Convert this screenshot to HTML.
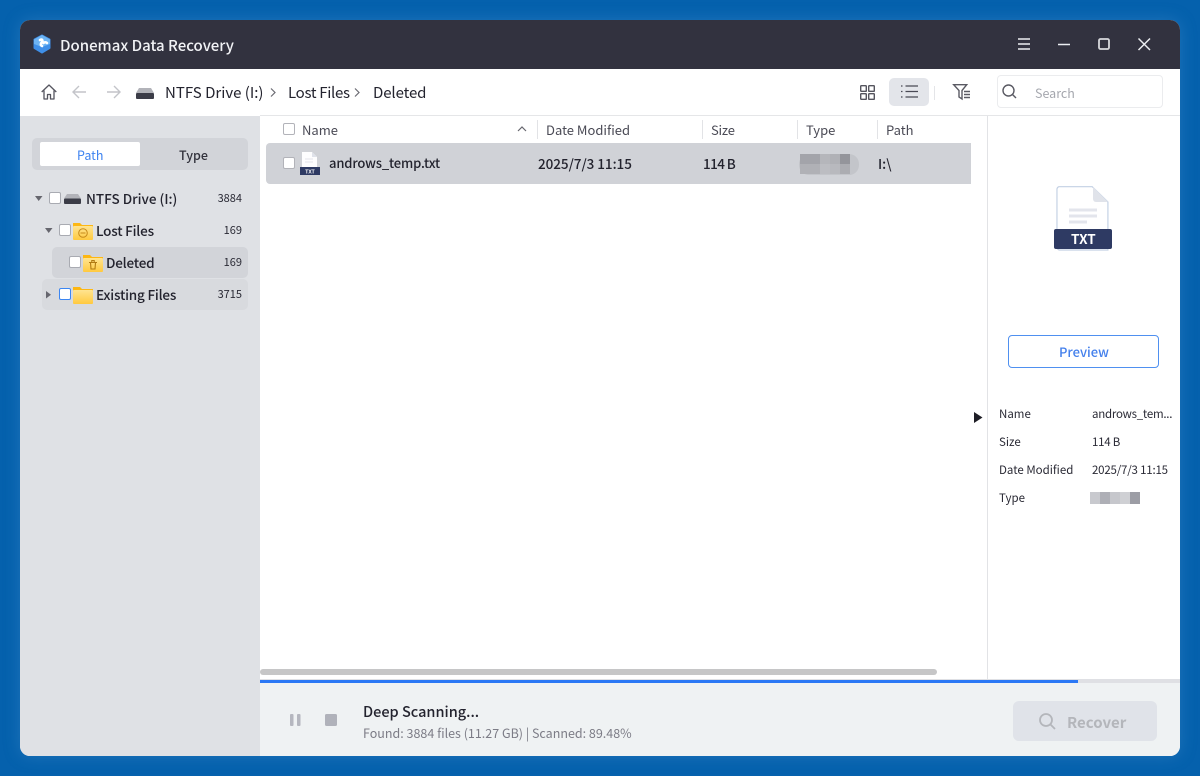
<!DOCTYPE html>
<html><head><meta charset="utf-8"><style>
*{box-sizing:border-box;margin:0;padding:0}
html,body{width:1200px;height:776px;overflow:hidden}
body{background:#0561ad;font-family:"Noto Sans CJK SC","Liberation Sans",sans-serif;color:#23232e;position:relative}
.a{position:absolute;white-space:nowrap;line-height:20px}
.cb{position:absolute;width:12px;height:12px;border:1px solid #a9abb2;border-radius:2px;background:#fff}
svg{position:absolute;overflow:visible}
.h{font-size:13px;color:#4a4a55;top:120px}
.sep{position:absolute;top:120px;width:1px;height:19px;background:#e2e3e6}
.t{font-size:13.5px;font-weight:500;color:#23232e;letter-spacing:-.2px}
.n{font-size:11px;color:#2a2a35}
.d{font-size:11.500px;color:#2a2a35}
.v{letter-spacing:-.25px}
.r{font-size:13.500px;font-weight:500;color:#23232e}
</style></head><body>
<div style="position:absolute;left:20px;top:20px;width:1160px;height:736px;border-radius:10px;background:#fff;box-shadow:0 0 16px rgba(70,145,205,.4)"></div>
<div style="position:absolute;left:20px;top:20px;width:1160px;height:49px;border-radius:10px 10px 0 0;background:#32323f"></div>
<svg style="left:32px;top:34px" width="20" height="20" viewBox="0 0 20 20"><path d="M10 1.500 17.500 5.500V14L10 18.500 2.500 14V5.500z" fill="#3f8fe8" stroke="#3f8fe8" stroke-width="2" stroke-linejoin="round"/><path d="M10 1 18 5.500v4.500l-8 3-8-3V5.500z" fill="#6db4f4"/><path d="M8 6c2-1 3 0 2 2-1 1-2 3 0 4M11.500 9c1-1 2.500-1 3.500 0" stroke="#fff" stroke-width="2.600" fill="none" stroke-linecap="round"/></svg>
<div class="a" style="left:60px;top:36px;font-size:15px;font-weight:500;color:#f2f3f6">Donemax Data Recovery</div>
<svg style="left:1018px;top:38px" width="13" height="13" fill="none" stroke="#eceef2" stroke-width="1.500"><path d="M0 1h12M0 6h12M0 11h12"/></svg>
<svg style="left:1058px;top:38px" width="13" height="13" fill="none" stroke="#eceef2" stroke-width="1.500"><path d="M0 6.500h12"/></svg>
<svg style="left:1098px;top:38px" width="13" height="13" fill="none" stroke="#d8d9dd" stroke-width="1.800"><rect x="1" y="1" width="10" height="10" rx="1.500"/></svg>
<svg style="left:1138px;top:38px" width="13" height="13" fill="none" stroke="#eceef2" stroke-width="1.500"><path d="M.5.500l11.500 11.500M12 .5.500 12"/></svg>

<svg style="left:41px;top:84px" width="16" height="16" fill="none" stroke="#55555f" stroke-width="1.300" stroke-linejoin="round"><path d="M.7 8 8 1l7.300 7M3 6.500V15h3.500v-4.500h3V15H13V6.500"/></svg>
<svg style="left:72px;top:85px" width="15" height="14" fill="none" stroke="#c3c4c9" stroke-width="1.400"><path d="M14 7H1M7 1 1 7l6 6"/></svg>
<svg style="left:106px;top:85px" width="15" height="14" fill="none" stroke="#c3c4c9" stroke-width="1.400"><path d="M1 7h13M8 1l6 6-6 6"/></svg>
<svg style="left:136px;top:88px" width="18" height="11"><path d="M3 0h12l3 5H0z" fill="#b2b3b9"/><rect y="5" width="18" height="6" rx="1" fill="#3b3c47"/></svg>
<div class="a" style="left:165px;top:83px;font-size:15px;color:#23232e">NTFS Drive (I:)</div>
<svg style="left:270px;top:88px" width="6" height="9" fill="none" stroke="#6a6a72" stroke-width="1.200"><path d="M1 .5 5 4.500 1 8.500"/></svg>
<div class="a" style="left:288px;top:83px;font-size:15px;letter-spacing:-.3px">Lost Files</div>
<svg style="left:354px;top:88px" width="6" height="9" fill="none" stroke="#6a6a72" stroke-width="1.200"><path d="M1 .5 5 4.500 1 8.500"/></svg>
<div class="a" style="left:373px;top:83px;font-size:15px;letter-spacing:-.1px">Deleted</div>

<svg style="left:860px;top:85px" width="15" height="15" fill="none" stroke="#55555e" stroke-width="1.400"><rect x=".7" y=".7" width="5.600" height="5.600" rx=".6"/><rect x="8.700" y=".7" width="5.600" height="5.600" rx=".6"/><rect x=".7" y="8.700" width="5.600" height="5.600" rx=".6"/><rect x="8.700" y="8.700" width="5.600" height="5.600" rx=".6"/></svg>
<div style="position:absolute;left:889px;top:78px;width:40px;height:28px;border-radius:5px;background:#e3e5ea"></div>
<svg style="left:901px;top:85px" width="17" height="13" fill="none" stroke="#4a4a55" stroke-width="1.300"><path d="M0 1h1.500M4.500 1H17M0 6.500h1.500M4.500 6.500H17M0 12h1.500M4.500 12H17"/></svg>
<div style="position:absolute;left:934px;top:86px;width:1px;height:14px;background:#e4e5e8"></div>
<svg style="left:953px;top:84px" width="18" height="16" fill="none" stroke="#5a5a63" stroke-width="1.400"><path d="M.7.700h13L9 6.500V15L6 13V6.500z"/><path d="M11 7.500h6M11 10.500h6M11 13.500h6"/></svg>
<div style="position:absolute;left:997px;top:75px;width:166px;height:33px;border:1px solid #ebecee;border-radius:4px"></div>
<svg style="left:1002px;top:84px" width="15" height="15" fill="none" stroke="#5a5a63" stroke-width="1.400"><circle cx="6.500" cy="6.500" r="5.500"/><path d="m10.500 10.500 3.500 3.500"/></svg>
<div class="a" style="left:1035px;top:83px;font-size:12.500px;color:#a5a7ae">Search</div>

<div style="position:absolute;left:20px;top:116px;width:240px;height:640px;background:#dfe1e5;border-radius:0 0 0 10px"></div>
<div style="position:absolute;left:32px;top:138px;width:216px;height:32px;border-radius:5px;background:#d2d4d9"></div>
<div style="position:absolute;left:40px;top:142px;width:100px;height:24px;border-radius:2px;background:#fff"></div>
<div class="a" style="left:77px;top:145px;font-size:12.500px;color:#3c82f0">Path</div>
<div class="a" style="left:179px;top:145px;font-size:12.500px;color:#33333d;font-weight:500">Type</div>

<div style="position:absolute;left:52px;top:247px;width:196px;height:31px;border-radius:5px;background:#d2d4d9"></div>
<div style="position:absolute;left:42px;top:279px;width:206px;height:31px;border-radius:5px;background:#d8dade"></div>
<svg style="left:35px;top:196px" width="8" height="5"><path d="M0 0h7.500L3.700 5z" fill="#66666e"/></svg>
<svg style="left:45px;top:228px" width="8" height="5"><path d="M0 0h7.500L3.700 5z" fill="#66666e"/></svg>
<svg style="left:46px;top:291px" width="5" height="8"><path d="M0 0v7.500L5 3.700z" fill="#66666e"/></svg>
<div class="cb" style="left:49px;top:192px"></div>
<div class="cb" style="left:59px;top:224px"></div>
<div class="cb" style="left:69px;top:256px"></div>
<div class="cb" style="left:59px;top:288px;border-color:#3c86f2"></div>
<svg style="left:64px;top:194px" width="17" height="10"><path d="M3 0h11l3 4.500H0z" fill="#b2b3b9"/><rect y="4.500" width="17" height="5.500" rx="1" fill="#3b3c47"/></svg>
<svg width="0" height="0"><defs><linearGradient id="f" x1="0" y1="0" x2="0" y2="1"><stop offset="0" stop-color="#ffe491"/><stop offset="1" stop-color="#ffc93f"/></linearGradient></defs></svg>
<svg style="left:73px;top:222px" width="20" height="18"><path d="M0 1h7l2 2h11v6H0z" fill="#fdb713"/><rect y="4" width="20" height="14" rx="1" fill="url(#f)"/><circle cx="10" cy="11" r="4.300" fill="none" stroke="#c78a1a" stroke-width="1"/><path d="M7.500 11h5" stroke="#c78a1a"/></svg>
<svg style="left:83px;top:254px" width="20" height="18"><path d="M0 1h7l2 2h11v6H0z" fill="#fdb713"/><rect y="4" width="20" height="14" rx="1" fill="url(#f)"/><path d="M6 8.500h8M7.500 8.500l.5 6.500h4l.5-6.500M8.800 8.500V6.500h2.400v2" fill="none" stroke="#b17a12" stroke-width="1.100"/></svg>
<svg style="left:73px;top:286px" width="20" height="18"><path d="M0 1h7l2 2h11v6H0z" fill="#fdb713"/><rect y="4" width="20" height="14" rx="1" fill="url(#f)"/></svg>
<div class="a t" style="left:86px;top:188px;letter-spacing:0">NTFS Drive (I:)</div>
<div class="a t" style="left:96px;top:220px">Lost Files</div>
<div class="a t" style="left:106px;top:252px">Deleted</div>
<div class="a t" style="left:96px;top:284px">Existing Files</div>
<div class="a n" style="right:958px;top:188px">3884</div>
<div class="a n" style="right:958px;top:220px">169</div>
<div class="a n" style="right:958px;top:252px">169</div>
<div class="a n" style="right:958px;top:284px">3715</div>

<div style="position:absolute;left:260px;top:115px;width:920px;height:1px;background:#e5e6e8"></div>
<div class="cb" style="left:283px;top:123px;border-color:#b2b3b9"></div>
<div class="a h" style="left:302px">Name</div>
<svg style="left:517px;top:126px" width="10" height="6" fill="none" stroke="#66666e" stroke-width="1.200"><path d="M1 5 5 1l4 4"/></svg>
<div class="sep" style="left:537px"></div><div class="a h" style="left:546px">Date Modified</div>
<div class="sep" style="left:702px"></div><div class="a h" style="left:711px;letter-spacing:-.2px">Size</div>
<div class="sep" style="left:797px"></div><div class="a h" style="left:806px">Type</div>
<div class="sep" style="left:877px"></div><div class="a h" style="left:886px">Path</div>

<div style="position:absolute;left:266px;top:143px;width:705px;height:41px;border-radius:4px 0 0 4px;background:#d0d2d7"></div>
<div class="cb" style="left:283px;top:157px;border-color:#b2b3b9"></div>
<svg style="left:300px;top:152px" width="20" height="23"><path d="M2 0h10l5 5v14H2z" fill="#fdfdfe"/><path d="M12 0v5h5z" fill="#dfe2ea"/><path d="M5 7h8M5 10h8" stroke="#e2e4ea"/><rect y="15" width="20" height="8" fill="#2e3a63"/><text x="10" y="21.500" text-anchor="middle" font-size="5" font-weight="700" fill="#fff" font-family="Liberation Sans">TXT</text></svg>
<div class="a r" style="left:329px;top:153px;font-size:13px;letter-spacing:-.15px">androws_temp.txt</div>
<div class="a r" style="left:538px;top:153px;letter-spacing:-.05px">2025/7/3 11:15</div>
<div class="a r" style="left:703px;top:153px;letter-spacing:-.6px">114 B</div>
<div style="position:absolute;left:799px;top:154px;width:60px;height:21px;border-radius:10px;background:#c3c5ca"></div>
<svg style="left:800px;top:154px" width="50" height="20"><rect width="20" height="10" fill="#a3a4aa"/><rect x="20" width="10" height="10" fill="#b5b6bb"/><rect x="30" width="10" height="10" fill="#b0b1b6"/><rect x="40" width="10" height="10" fill="#94959b"/><rect y="10" width="20" height="10" fill="#b0b1b6"/><rect x="20" y="10" width="10" height="10" fill="#bcbdc2"/><rect x="30" y="10" width="10" height="10" fill="#b8b9be"/><rect x="40" y="10" width="10" height="10" fill="#acadb2"/></svg>
<div class="a r" style="left:878px;top:153px">I:\</div>

<div style="position:absolute;left:987px;top:116px;width:1px;height:564px;background:#e2e3e6"></div>
<div style="position:absolute;left:260px;top:669px;width:677px;height:6px;border-radius:3px;background:#c6c6c7"></div>

<svg style="left:1054px;top:186px" width="58" height="64"><path d="M4 .7h34L54 16V64H4.500a3 3 0 0 1-2.500-3V3a3 3 0 0 1 2-2.300z" transform="translate(1 0) scale(.98 1)" fill="#fff" stroke="#c3d0e4" stroke-width="1.200"/><path d="M39 1v12a3 3 0 0 0 3 3h12z" fill="#e0e3ea"/><path d="M15 24h28M15 30h28M15 36h18" stroke="#e3e5ec" stroke-width="3"/><rect y="43" width="58" height="20" rx="2" fill="#2e3a63"/></svg>
<div class="a" style="left:1071px;top:228px;font-size:13.500px;font-weight:700;color:#fff">TXT</div>

<div style="position:absolute;left:1008px;top:335px;width:151px;height:33px;border:1px solid #4f90f0;border-radius:4px"></div>
<div class="a" style="left:1059px;top:342px;font-size:13px;font-weight:500;color:#4480ec">Preview</div>
<svg style="left:974px;top:412px" width="9" height="11"><path d="M0 0v11l8.500-5.500z" fill="#1e1e26"/></svg>
<div class="a d" style="left:999px;top:404px">Name</div><div class="a d v" style="left:1092px;top:404px">androws_tem...</div>
<div class="a d" style="left:999px;top:432px">Size</div><div class="a d v" style="left:1092px;top:432px">114 B</div>
<div class="a d" style="left:999px;top:460px">Date Modified</div><div class="a d" style="left:1092px;top:460px;letter-spacing:-.2px">2025/7/3 11:15</div>
<div class="a d" style="left:999px;top:488px">Type</div>
<svg style="left:1090px;top:492px" width="50" height="12"><rect width="10" height="12" fill="#c8c9ce"/><rect x="10" width="10" height="12" fill="#aeafb6"/><rect x="20" width="10" height="12" fill="#c6c7cc"/><rect x="30" width="10" height="12" fill="#cfd0d4"/><rect x="40" width="10" height="12" fill="#9c9da5"/></svg>

<div style="position:absolute;left:260px;top:680px;width:920px;height:76px;background:#eff2f3;border-radius:0 0 10px 0"></div>
<div style="position:absolute;left:260px;top:679px;width:920px;height:4px;background:#dfe0e4"></div>
<div style="position:absolute;left:260px;top:680px;width:818px;height:3px;background:#2b78f5"></div>
<svg style="left:290px;top:714px" width="11" height="12" fill="#b5b7bf"><rect width="3.500" height="12" rx="1"/><rect x="7" width="3.500" height="12" rx="1"/></svg>
<svg style="left:325px;top:714px" width="12" height="12"><rect width="12" height="12" rx="1.500" fill="#b0b2ba"/></svg>
<div class="a" style="left:363px;top:702px;font-size:14.500px;font-weight:500;color:#23232e">Deep Scanning...</div>
<div class="a" style="left:363px;top:723px;font-size:12.500px;color:#7c7c86">Found: 3884 files (11.27 GB) | Scanned: 89.48%</div>
<div style="position:absolute;left:1013px;top:701px;width:144px;height:40px;border-radius:6px;background:#e0e3e9"></div>
<svg style="left:1039px;top:713px" width="17" height="17" fill="none" stroke="#b4b6bb" stroke-width="1.800"><circle cx="7" cy="7" r="6"/><path d="m11.500 11.500 4.500 4.500"/></svg>
<div class="a" style="left:1067px;top:713px;font-size:15px;font-weight:700;color:#b4b6bb">Recover</div>
</body></html>
